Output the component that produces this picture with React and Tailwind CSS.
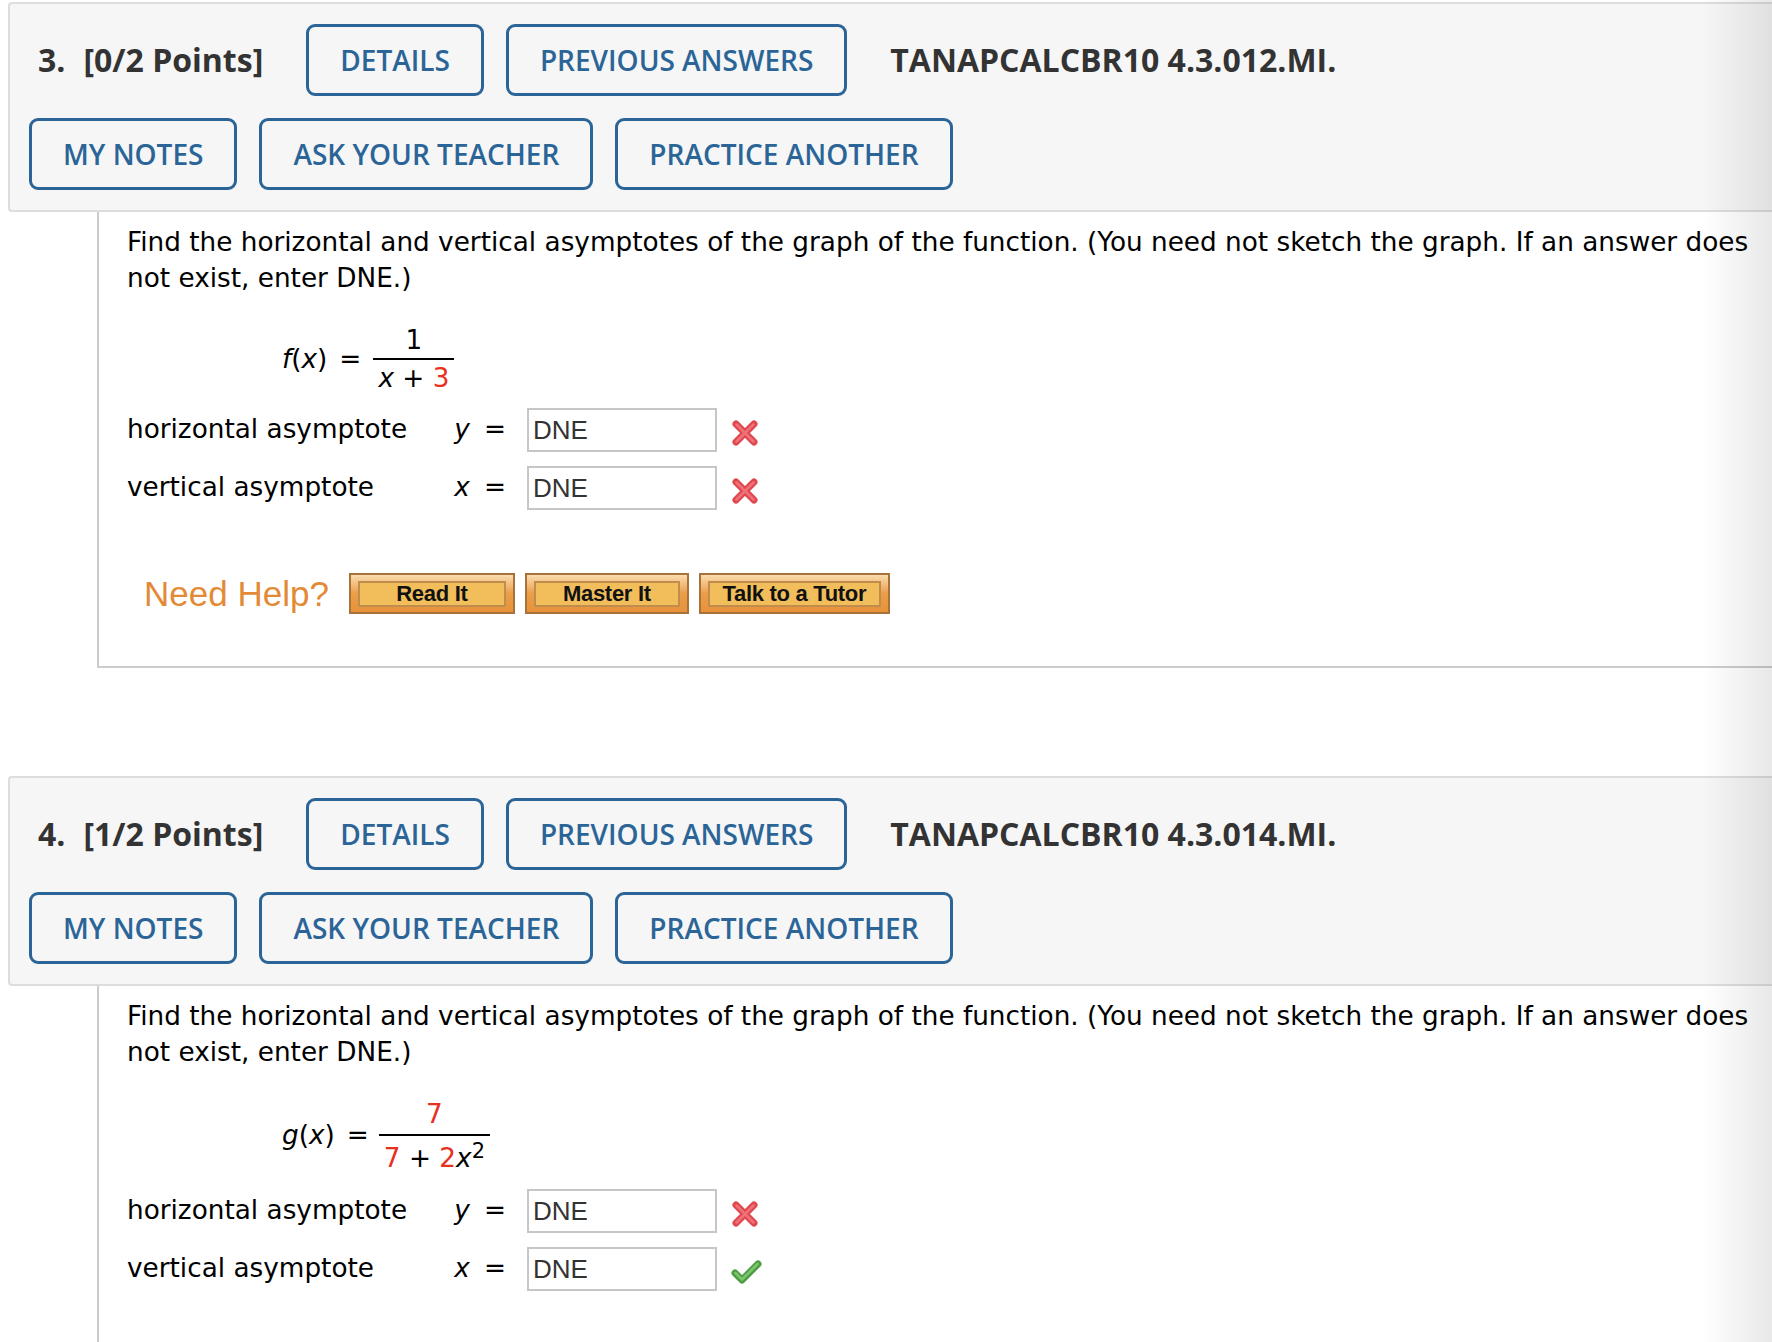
import React from 'react';

function OutlineButton({ children }) {
  return (
    <button className="h-[72px] shrink-0 rounded-[9px] border-[3px] border-[#2b6598] px-[31px] font-['Open_Sans',sans-serif] text-[28px] font-semibold leading-none text-[#2b6598]">
      {children}
    </button>
  );
}

function WrongMark() {
  return (
    <svg width="30" height="30" viewBox="0 0 30 30" className="ml-[13px] mt-[5px] shrink-0">
      <path d="M6 6 L24 24 M24 6 L6 24" stroke="#e0484f" strokeWidth="7" strokeLinecap="round" />
      <path d="M6.5 6.5 L23.5 23.5 M23.5 6.5 L6.5 23.5" stroke="#ef7278" strokeWidth="2.5" strokeLinecap="round" />
    </svg>
  );
}

function RightMark() {
  return (
    <svg width="32" height="30" viewBox="0 0 32 30" className="ml-[13px] mt-[5px] shrink-0">
      <path d="M5 16 L12 23 L28 7" fill="none" stroke="#4f9d44" strokeWidth="7" strokeLinecap="round" strokeLinejoin="round" />
      <path d="M5.5 16 L12 22.5 L27.5 7" fill="none" stroke="#7cc66b" strokeWidth="2.5" strokeLinecap="round" strokeLinejoin="round" />
    </svg>
  );
}

function AnswerRow({ label, v, correct }) {
  return (
    <div className="flex h-[44px] items-center">
      <span className="w-[321px] shrink-0">{label}</span>
      <span className="w-[28px] shrink-0 text-center italic">{v}</span>
      <span className="w-[38px] shrink-0 text-center">=</span>
      <input
        readOnly
        defaultValue="DNE"
        className="ml-[13px] h-[44px] w-[190px] shrink-0 border-2 border-[#c6c6c6] bg-white px-[4px] font-['Liberation_Sans',Arial,sans-serif] text-[26px] text-[#333] outline-none"
      />
      {correct ? <RightMark /> : <WrongMark />}
    </div>
  );
}

function HelpButton({ children, width }) {
  return (
    <div className={`h-[41px] ${width} shrink-0 border-2 border-[#a8733b] bg-gradient-to-b from-[#f9dcae] via-[#eb9d47] to-[#e8923b] px-[7px] pb-[5px] pt-[6px]`}>
      <div className="flex h-full items-center justify-center border-2 border-[#c18d4c] bg-[#f2be5c] font-['Liberation_Sans',Arial,sans-serif] text-[22px] font-bold leading-none tracking-[-0.3px] text-[#111]">
        {children}
      </div>
    </div>
  );
}

function Header({ num, points, code }) {
  return (
    <div className="ml-[8px] rounded-l-[4px] border-y-2 border-l-2 border-[#dddddd] bg-[#f6f6f6] pb-[20px] pl-[19px] pt-[20px]">
      <div className="flex items-center">
        <div className="ml-[9px] flex font-['Open_Sans',sans-serif] text-[32px] font-bold text-[#333]">
          <span>{num}.</span>
          <span className="ml-[18px]">[{points} Points]</span>
        </div>
        <div className="ml-[43px] flex gap-[22px]">
          <OutlineButton>DETAILS</OutlineButton>
          <OutlineButton>PREVIOUS ANSWERS</OutlineButton>
        </div>
        <div className="ml-[43px] font-['Open_Sans',sans-serif] text-[32px] font-bold text-[#333]">{code}</div>
      </div>
      <div className="mt-[22px] flex gap-[22px]">
        <OutlineButton>MY NOTES</OutlineButton>
        <OutlineButton>ASK YOUR TEACHER</OutlineButton>
        <OutlineButton>PRACTICE ANOTHER</OutlineButton>
      </div>
    </div>
  );
}

function Prompt() {
  return (
    <p className="leading-[36px]">
      Find the horizontal and vertical asymptotes of the graph of the function. (You need not sketch the graph. If an answer does
      <br />
      not exist, enter DNE.)
    </p>
  );
}

export default function App() {
  return (
    <div className="relative h-[1342px] w-full overflow-hidden bg-white pt-[2px] font-['DejaVu_Sans',Verdana,sans-serif] text-[26.3px] text-black">
      {/* question 3 */}
      <Header num="3" points="0/2" code="TANAPCALCBR10 4.3.012.MI." />
      <div className="ml-[97px] border-b-2 border-l-2 border-[#cccccc] pb-[52px] pl-[28px] pt-[12px]">
        <Prompt />
        <div className="mt-[30px] flex items-center pl-[155px]">
          <span className="-mt-[3px]">
            <i>f</i>(<i>x</i>)
          </span>
          <span className="ml-[12px] mr-[12px] -mt-[3px]">=</span>
          <span className="inline-flex flex-col items-center">
            <span className="-mt-[3px] px-[5px] leading-[35px]">1</span>
            <span className="h-[2px] w-full bg-black" />
            <span className="px-[5px] leading-[36px]">
              <i>x</i> + <span className="text-[#e8301f]">3</span>
            </span>
          </span>
        </div>
        <div className="mt-[12px] flex flex-col gap-[14px]">
          <AnswerRow label="horizontal asymptote" v="y" />
          <AnswerRow label="vertical asymptote" v="x" />
        </div>
        <div className="mt-[63px] flex items-center pl-[17px]">
          <span className="font-['Liberation_Sans',Arial,sans-serif] text-[35px] leading-none text-[#e38a36]">Need Help?</span>
          <div className="ml-[20px] flex gap-[10px]">
            <HelpButton width="w-[166px]">Read It</HelpButton>
            <HelpButton width="w-[164px]">Master It</HelpButton>
            <HelpButton width="w-[191px]">Talk to a Tutor</HelpButton>
          </div>
        </div>
      </div>

      {/* question 4 */}
      <div className="mt-[108px]">
        <Header num="4" points="1/2" code="TANAPCALCBR10 4.3.014.MI." />
        <div className="ml-[97px] min-h-[400px] border-l-2 border-[#cccccc] pl-[28px] pt-[12px]">
          <Prompt />
          <div className="mt-[24px] flex items-center pl-[155px]">
            <span>
              <i>g</i>(<i>x</i>)
            </span>
            <span className="ml-[12px] mr-[10px]">=</span>
            <span className="inline-flex flex-col items-center">
              <span className="px-[5px] leading-[40px] text-[#e8301f]">7</span>
              <span className="h-[2px] w-full bg-black" />
              <span className="px-[5px] pt-[3px] leading-[38px]">
                <span className="text-[#e8301f]">7</span> + <span className="text-[#e8301f]">2</span>
                <i>x</i>
                <sup className="-top-[9px] text-[21px]">2</sup>
              </span>
            </span>
          </div>
          <div className="mt-[12px] flex flex-col gap-[14px]">
            <AnswerRow label="horizontal asymptote" v="y" />
            <AnswerRow label="vertical asymptote" v="x" correct />
          </div>
        </div>
      </div>

      {/* page edge shading */}
      <div className="pointer-events-none absolute inset-y-0 right-0 w-[70px] bg-gradient-to-r from-black/0 to-black/[0.09]" />
    </div>
  );
}
